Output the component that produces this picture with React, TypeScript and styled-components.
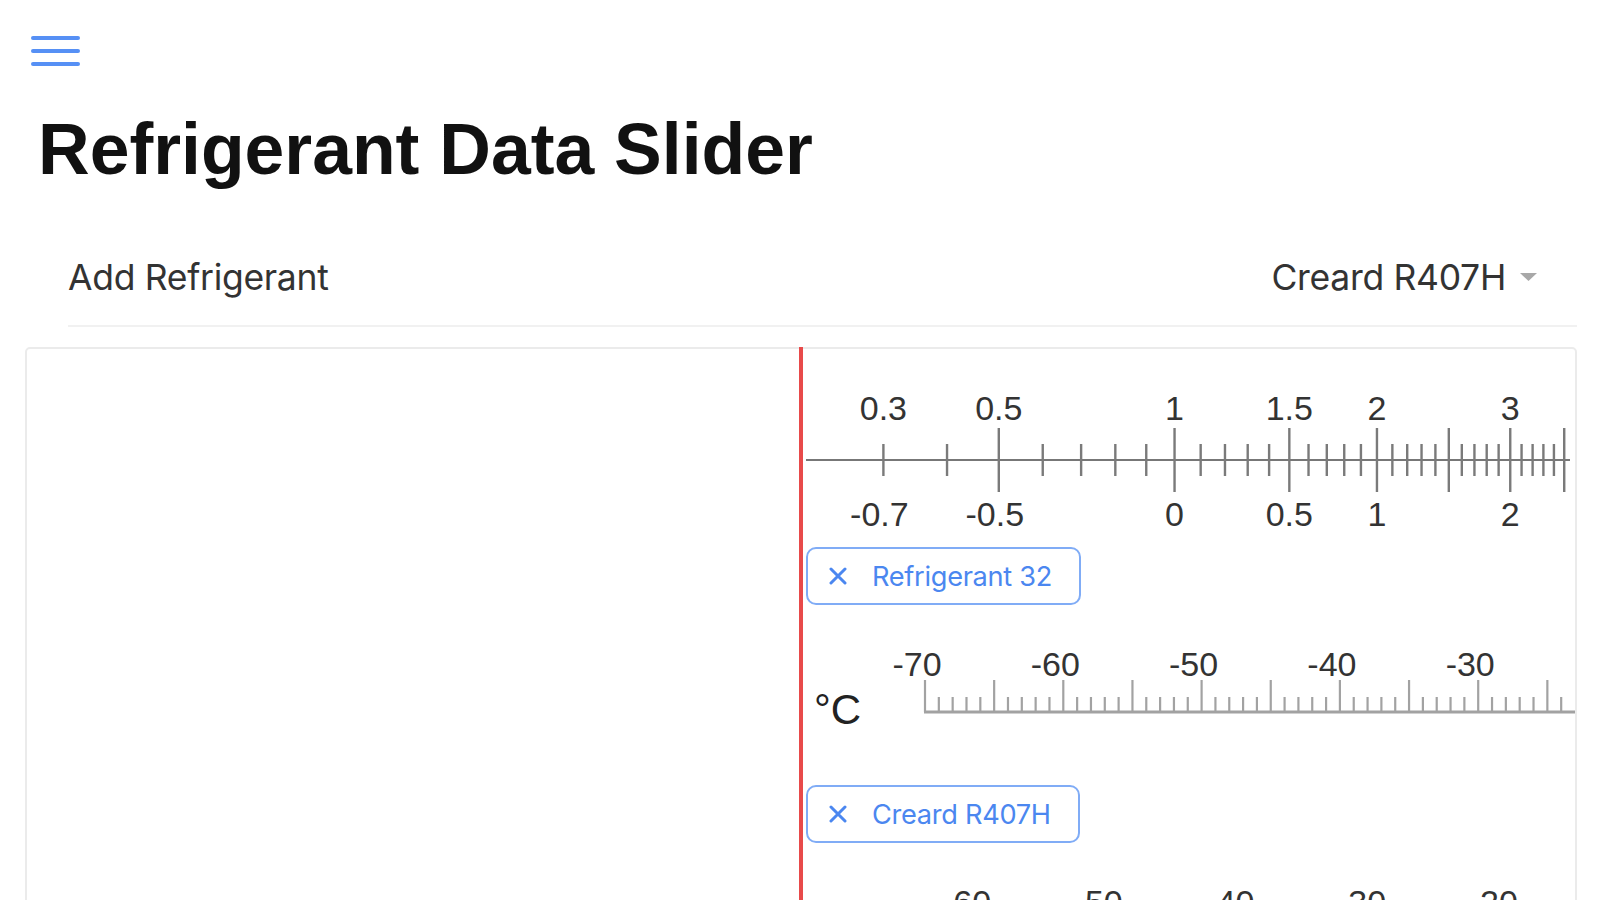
import React from 'react';
import styled, { createGlobalStyle } from 'styled-components';

const GlobalStyle = createGlobalStyle`
  html, body { margin: 0; padding: 0; background: #ffffff; }
  body { font-family: Inter, "Liberation Sans", Arial, sans-serif; color: #222; }
  * { box-sizing: border-box; }
`;

const Page = styled.div`
  height: 100vh;
  overflow: hidden;
  padding: 0 22px 0 25px;
`;

const MenuButton = styled.button`
  display: flex;
  flex-direction: column;
  justify-content: space-between;
  width: 49px;
  height: 30px;
  margin: 36px 0 0 6px;
  padding: 0;
  border: 0;
  background: none;
  cursor: pointer;
`;

const MenuBar = styled.span`
  display: block;
  height: 4px;
  border-radius: 2px;
  background: #5690f5;
`;

const Title = styled.h1`
  margin: 40px 0 0 13px;
  font-family: "Liberation Sans", Arial, sans-serif;
  font-weight: 700;
  font-size: 71.5px;
  line-height: 86px;
  color: #111;
`;

const Toolbar = styled.div`
  display: flex;
  align-items: center;
  justify-content: space-between;
  height: 98px;
  margin: 37px 0 0 43px;
  padding-right: 40px;
  border-bottom: 2px solid #f1f1f1;
`;

const ToolbarText = styled.span`
  font-family: Inter, "Liberation Sans", sans-serif;
  font-size: 35.5px;
  color: #333;
  letter-spacing: -0.3px;
`;

const SelectBox = styled.div`
  display: flex;
  align-items: center;
  gap: 14px;
  cursor: pointer;
`;

const Card = styled.div`
  position: relative;
  display: grid;
  grid-template-columns: 1fr 1fr;
  margin-top: 20px;
  border: 2px solid #ebebeb;
  border-radius: 5px;
`;

const LeftPane = styled.div``;

const RightPane = styled.div`
  display: flex;
  flex-direction: column;
  align-items: flex-start;
`;

const Cursor = styled.div`
  position: absolute;
  top: -2px;
  bottom: 0;
  left: 50%;
  width: 4px;
  transform: translateX(-50%);
  background: #e84a4a;
`;

const Chip = styled.button`
  display: inline-flex;
  align-items: center;
  gap: 25px;
  height: 58px;
  margin-left: 5px;
  padding: 0 27px 0 21px;
  border: 2px solid #80acf6;
  border-radius: 10px;
  background: #fff;
  color: #4b87f0;
  font-family: Inter, "Liberation Sans", sans-serif;
  font-size: 27.2px;
  letter-spacing: -0.3px;
  cursor: pointer;
`;

const RulerSvg = styled.svg`
  display: block;
  width: 774px;
  font-family: "Liberation Sans", Arial, sans-serif;
`;

const PANE_LEFT = 801;
const sx = (pageX: number) => pageX - PANE_LEFT;

const r32SatTemp = (p: number) => 1898 / (9.834 - Math.log(p)) + 28.19 - 273.15;
const r32X = (t: number) => 925 + (t + 70) * 13.83;
const r407hX = (t: number) => 974.5 + (t + 60) * 13.17;

const CloseIcon = () => (
  <svg width="18" height="18" viewBox="0 0 18 18">
    <path d="M2 2 L16 16 M16 2 L2 16" stroke="#4b87f0" strokeWidth="3" strokeLinecap="round" />
  </svg>
);

const Caret = () => (
  <svg width="17" height="8" viewBox="0 0 17 8">
    <path d="M0 0 L17 0 L8.5 8 Z" fill="#a8a8a8" />
  </svg>
);

const TOP_LABELS: Record<number, string> = { 3: '0.3', 5: '0.5', 10: '1', 15: '1.5', 20: '2', 30: '3' };
const BOTTOM_LABELS: Record<number, string> = { 3: '-0.7', 5: '-0.5', 10: '0', 15: '0.5', 20: '1', 30: '2' };

const PressureRuler = () => {
  const LINE = 111;
  const items: React.ReactNode[] = [];
  for (let i = 3; i <= 35; i++) {
    const x = sx(r32X(r32SatTemp(i / 10)));
    const long = i % 5 === 0;
    const h = long ? 32 : 16;
    items.push(<line key={`t${i}`} x1={x} x2={x} y1={LINE - h} y2={LINE + h} stroke="#7a7a7a" strokeWidth="2.4" />);
    if (TOP_LABELS[i]) {
      items.push(
        <text key={`a${i}`} x={x} y={71} textAnchor="middle" fontSize="34" fill="#333">{TOP_LABELS[i]}</text>
      );
    }
    if (BOTTOM_LABELS[i]) {
      const neg = BOTTOM_LABELS[i].startsWith('-');
      items.push(
        <text key={`b${i}`} x={x - (neg ? 4 : 0)} y={177} textAnchor="middle" fontSize="34" fill="#333">{BOTTOM_LABELS[i]}</text>
      );
    }
  }
  return (
    <RulerSvg height="198" viewBox="0 0 774 198">
      <line x1={5} x2={769} y1={LINE} y2={LINE} stroke="#777" strokeWidth="2" />
      {items}
    </RulerSvg>
  );
};

type TempRulerProps = { from: number; to: number; toX: (t: number) => number };

const TempRuler = ({ from, to, toX }: TempRulerProps) => {
  const BASE = 107;
  const items: React.ReactNode[] = [];
  for (let t = from; t <= to; t++) {
    const x = sx(toX(t));
    if (x > 773) break;
    const h = t % 5 === 0 ? 32 : 15;
    items.push(<line key={`t${t}`} x1={x} x2={x} y1={BASE - h} y2={BASE} stroke="#a2a2a2" strokeWidth="2.2" />);
    if (t % 10 === 0) {
      items.push(
        <text key={`l${t}`} x={x - 8} y={71} textAnchor="middle" fontSize="34" fill="#333">{t}</text>
      );
    }
  }
  const startX = sx(toX(from)) - 1;
  return (
    <RulerSvg height="180" viewBox="0 0 774 180">
      <text x={13} y={119} fontSize="42" fill="#222">°C</text>
      <line x1={startX} x2={774} y1={BASE} y2={BASE} stroke="#a2a2a2" strokeWidth="3" />
      {items}
    </RulerSvg>
  );
};

export default function App() {
  return (
    <>
      <GlobalStyle />
      <Page>
        <MenuButton aria-label="menu">
          <MenuBar />
          <MenuBar />
          <MenuBar />
        </MenuButton>
        <Title>Refrigerant Data Slider</Title>
        <Toolbar>
          <ToolbarText>Add Refrigerant</ToolbarText>
          <SelectBox>
            <ToolbarText>Creard R407H</ToolbarText>
            <Caret />
          </SelectBox>
        </Toolbar>
        <Card>
          <LeftPane />
          <RightPane>
            <PressureRuler />
            <Chip>
              <CloseIcon />
              Refrigerant 32
            </Chip>
            <TempRuler from={-70} to={-20} toX={r32X} />
            <Chip>
              <CloseIcon />
              Creard R407H
            </Chip>
            <TempRuler from={-64} to={-15} toX={r407hX} />
          </RightPane>
          <Cursor />
        </Card>
      </Page>
    </>
  );
}
